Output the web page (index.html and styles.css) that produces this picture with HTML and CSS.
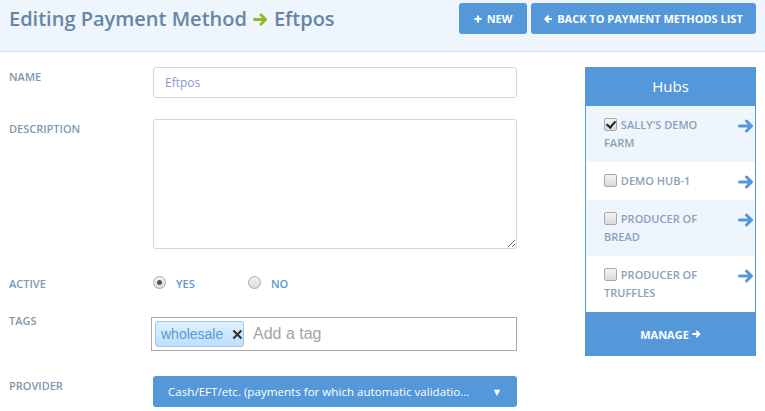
FILE: index.html
```html
<!DOCTYPE html>
<html>
<head>
<meta charset="utf-8">
<link rel="stylesheet" href="styles.css">
</head>
<body>
<header class="page-header">
  <h1 class="title">Editing Payment Method <svg class="title-arrow" viewBox="0 0 16 14" width="15" height="13"><path d="M1.5 7H13M8.5 2L13.5 7L8.5 12" fill="none" stroke="#8dbb1f" stroke-width="3" stroke-linecap="round" stroke-linejoin="round"/></svg> Eftpos</h1>
  <div class="actions">
    <a class="btn btn-new"><svg viewBox="0 0 8 8" width="8" height="8"><path d="M4 0.5V7.5M0.5 4H7.5" stroke="#fff" stroke-width="2.2"/></svg>New</a>
    <a class="btn btn-back"><svg viewBox="0 0 8 8" width="8" height="8"><path d="M7.2 4H1.5M4.2 1.2L1.3 4L4.2 6.8" fill="none" stroke="#fff" stroke-width="2" stroke-linecap="round" stroke-linejoin="round"/></svg>Back to Payment Methods List</a>
  </div>
</header>

<main class="content">
  <form class="form">
    <div class="row row-name">
      <label class="label">Name</label>
      <input class="text-input" type="text" value="Eftpos">
    </div>
    <div class="row row-desc">
      <label class="label">Description</label>
      <textarea class="textarea"></textarea>
    </div>
    <div class="row row-active">
      <label class="label">Active</label>
      <div class="radios">
        <label class="radio-opt"><input type="radio" name="active" class="radio" checked> Yes</label>
        <label class="radio-opt"><input type="radio" name="active" class="radio"> No</label>
      </div>
    </div>
    <div class="row row-tags">
      <label class="label">Tags</label>
      <div class="tags-input">
        <span class="tag">wholesale <svg class="tag-x" viewBox="0 0 12 12" width="11" height="11"><path d="M1.5 1.5L10.5 10.5M10.5 1.5L1.5 10.5" stroke="#333" stroke-width="2.4"/></svg></span>
        <span class="tag-placeholder">Add a tag</span>
      </div>
    </div>
    <div class="row row-provider">
      <label class="label">Provider</label>
      <div class="select">
        <span class="select-text">Cash/EFT/etc. (payments for which automatic validatio...</span>
        <span class="select-caret">▼</span>
      </div>
    </div>
  </form>

  <aside class="hubs">
    <div class="hubs-head">Hubs</div>
    <ul class="hub-list">
      <li class="hub alt"><span class="hub-name"><input type="checkbox" class="check" checked> Sally's Demo Farm</span><svg class="hub-arrow" viewBox="0 0 16 14" width="16" height="14"><path d="M1.5 7H13M8.5 2L13.5 7L8.5 12" fill="none" stroke="#5498da" stroke-width="3" stroke-linecap="round" stroke-linejoin="round"/></svg></li>
      <li class="hub"><span class="hub-name"><input type="checkbox" class="check"> Demo Hub-1</span><svg class="hub-arrow" viewBox="0 0 16 14" width="16" height="14"><path d="M1.5 7H13M8.5 2L13.5 7L8.5 12" fill="none" stroke="#5498da" stroke-width="3" stroke-linecap="round" stroke-linejoin="round"/></svg></li>
      <li class="hub alt"><span class="hub-name"><input type="checkbox" class="check"> Producer of Bread</span><svg class="hub-arrow" viewBox="0 0 16 14" width="16" height="14"><path d="M1.5 7H13M8.5 2L13.5 7L8.5 12" fill="none" stroke="#5498da" stroke-width="3" stroke-linecap="round" stroke-linejoin="round"/></svg></li>
      <li class="hub"><span class="hub-name"><input type="checkbox" class="check"> Producer of Truffles</span><svg class="hub-arrow" viewBox="0 0 16 14" width="16" height="14"><path d="M1.5 7H13M8.5 2L13.5 7L8.5 12" fill="none" stroke="#5498da" stroke-width="3" stroke-linecap="round" stroke-linejoin="round"/></svg></li>
    </ul>
    <a class="hubs-manage">Manage <svg viewBox="0 0 10 9" width="9" height="8"><path d="M1 4.5H8M5.3 1.5L8.3 4.5L5.3 7.5" fill="none" stroke="#fff" stroke-width="2" stroke-linecap="round" stroke-linejoin="round"/></svg></a>
  </aside>
</main>
</body>
</html>
```

FILE: styles.css
```css
* { box-sizing: border-box; }

body {
  margin: 0;
  font-family: "Open Sans", "DejaVu Sans", sans-serif;
  background: #fff;
  color: #7d98b3;
}

.page-header {
  height: 52px;
  background: #eef5fc;
  border-bottom: 1px solid #d3dfec;
  display: flex;
  justify-content: space-between;
  align-items: flex-start;
  padding: 3px 9px 0 9px;
}

.title {
  margin: 0;
  font-size: 20px;
  font-weight: 600;
  line-height: 31px;
  color: #6686a6;
  display: flex;
  align-items: center;
  gap: 6px;
}

.title-arrow { margin-top: 1px; }

.actions {
  display: flex;
  gap: 4px;
}

.btn {
  height: 31px;
  background: #5498da;
  color: #fff;
  border-radius: 3px;
  font-size: 11px;
  font-weight: 700;
  text-transform: uppercase;
  display: flex;
  align-items: center;
  justify-content: center;
  gap: 5px;
  text-decoration: none;
}

.btn-new { width: 68px; }
.btn-back { width: 225px; }

.content {
  display: flex;
  padding: 15px 9px 0 9px;
}

.form {
  width: 508px;
}

.row {
  display: grid;
  grid-template-columns: 144px 364px;
  align-items: start;
}

.label {
  font-size: 11px;
  font-weight: 600;
  text-transform: uppercase;
  color: #7d98b3;
  padding-top: 2px;
  line-height: 16px;
}

.row-name { margin-bottom: 21px; }
.row-desc { margin-bottom: 25px; }
.row-active { margin-bottom: 17px; height: 20px; }
.row-tags { margin-bottom: 25px; }

.text-input {
  height: 31px;
  border: 1px solid #c9d9ec;
  border-radius: 3px;
  padding: 0 11px;
  font-family: "Open Sans", sans-serif;
  font-size: 12px;
  color: #8b98cc;
  width: 364px;
}

.textarea {
  height: 130px;
  width: 364px;
  border: 1px solid #c9d9ec;
  border-radius: 3px;
  resize: vertical;
  display: block;
}

.radios {
  display: flex;
  padding-top: 2px;
}

.radio-opt {
  display: flex;
  align-items: flex-start;
  font-size: 11px;
  font-weight: 600;
  color: #5f97cf;
  text-transform: uppercase;
  line-height: 16px;
  width: 95px;
  gap: 10px;
}

.radio {
  appearance: none;
  margin: 0;
  width: 13px;
  height: 13px;
  border-radius: 50%;
  border: 1px solid #a8a8a8;
  background: linear-gradient(#f4f4f4, #dcdcdc);
  position: relative;
}

.radio:checked::after {
  content: "";
  position: absolute;
  left: 3px;
  top: 3px;
  width: 5px;
  height: 5px;
  border-radius: 50%;
  background: #555;
}

.tags-input {
  margin-top: 6px;
  margin-left: -2px;
  width: 366px;
  height: 34px;
  border: 1px solid #a9a9a9;
  background: #fff;
  display: flex;
  align-items: center;
  padding-left: 3px;
  font-family: "Liberation Sans", Arial, sans-serif;
}

.tag {
  height: 26px;
  width: 89px;
  display: flex;
  align-items: center;
  padding: 0 0 0 5px;
  font-size: 14px;
  color: #5a9ad6;
  background: linear-gradient(#dff0ff, #bddffb);
  border: 1px solid #9ec9ee;
  border-radius: 3px;
}

.tag-x {
  margin-left: 9px;
}

.tag-placeholder {
  margin-left: 9px;
  font-size: 16px;
  color: #a3a3a3;
}

.select {
  width: 364px;
  height: 31px;
  background: #5498da;
  border-radius: 3px;
  color: #fff;
  display: flex;
  align-items: center;
  padding: 0 17px 0 15px;
  font-size: 11.6px;
  white-space: nowrap;
}

.select-text {
  flex: 1;
  min-width: 0;
  overflow: hidden;
}

.select-caret {
  font-size: 8px;
  margin-left: 10px;
}

.hubs {
  margin-left: 68px;
  width: 171px;
}

.hubs-head {
  height: 39px;
  background: #5498da;
  color: #fff;
  font-size: 15px;
  text-align: center;
  line-height: 39px;
}

.hub-list {
  list-style: none;
  margin: 0;
  padding: 0;
  border-left: 1px solid #5498da;
  border-right: 1px solid #5498da;
}

.hub {
  display: flex;
  justify-content: space-between;
  align-items: flex-start;
  padding: 10px 1px 10px 18px;
  background: #fff;
}

.hub.alt { background: #eef5fc; }

.hub-name {
  width: 113px;
  font-size: 11px;
  font-weight: 600;
  line-height: 18px;
  text-transform: uppercase;
  color: #8aa1b9;
}

.check {
  appearance: none;
  width: 13px;
  height: 13px;
  margin: 0 1px 0 0;
  vertical-align: -2px;
  border: 1px solid #a8a8a8;
  border-radius: 2px;
  background: linear-gradient(#f4f4f4, #d9d9d9);
  position: relative;
}

.check:checked::after {
  content: "";
  position: absolute;
  left: 3px;
  top: 0px;
  width: 4px;
  height: 7px;
  border: solid #222;
  border-width: 0 2px 2px 0;
  transform: rotate(40deg);
}

.hub-arrow { margin-top: 3px; }

.hubs-manage {
  height: 44px;
  background: #5498da;
  color: #fff;
  font-size: 11px;
  font-weight: 700;
  text-transform: uppercase;
  display: flex;
  align-items: center;
  justify-content: center;
  gap: 3px;
}
```
